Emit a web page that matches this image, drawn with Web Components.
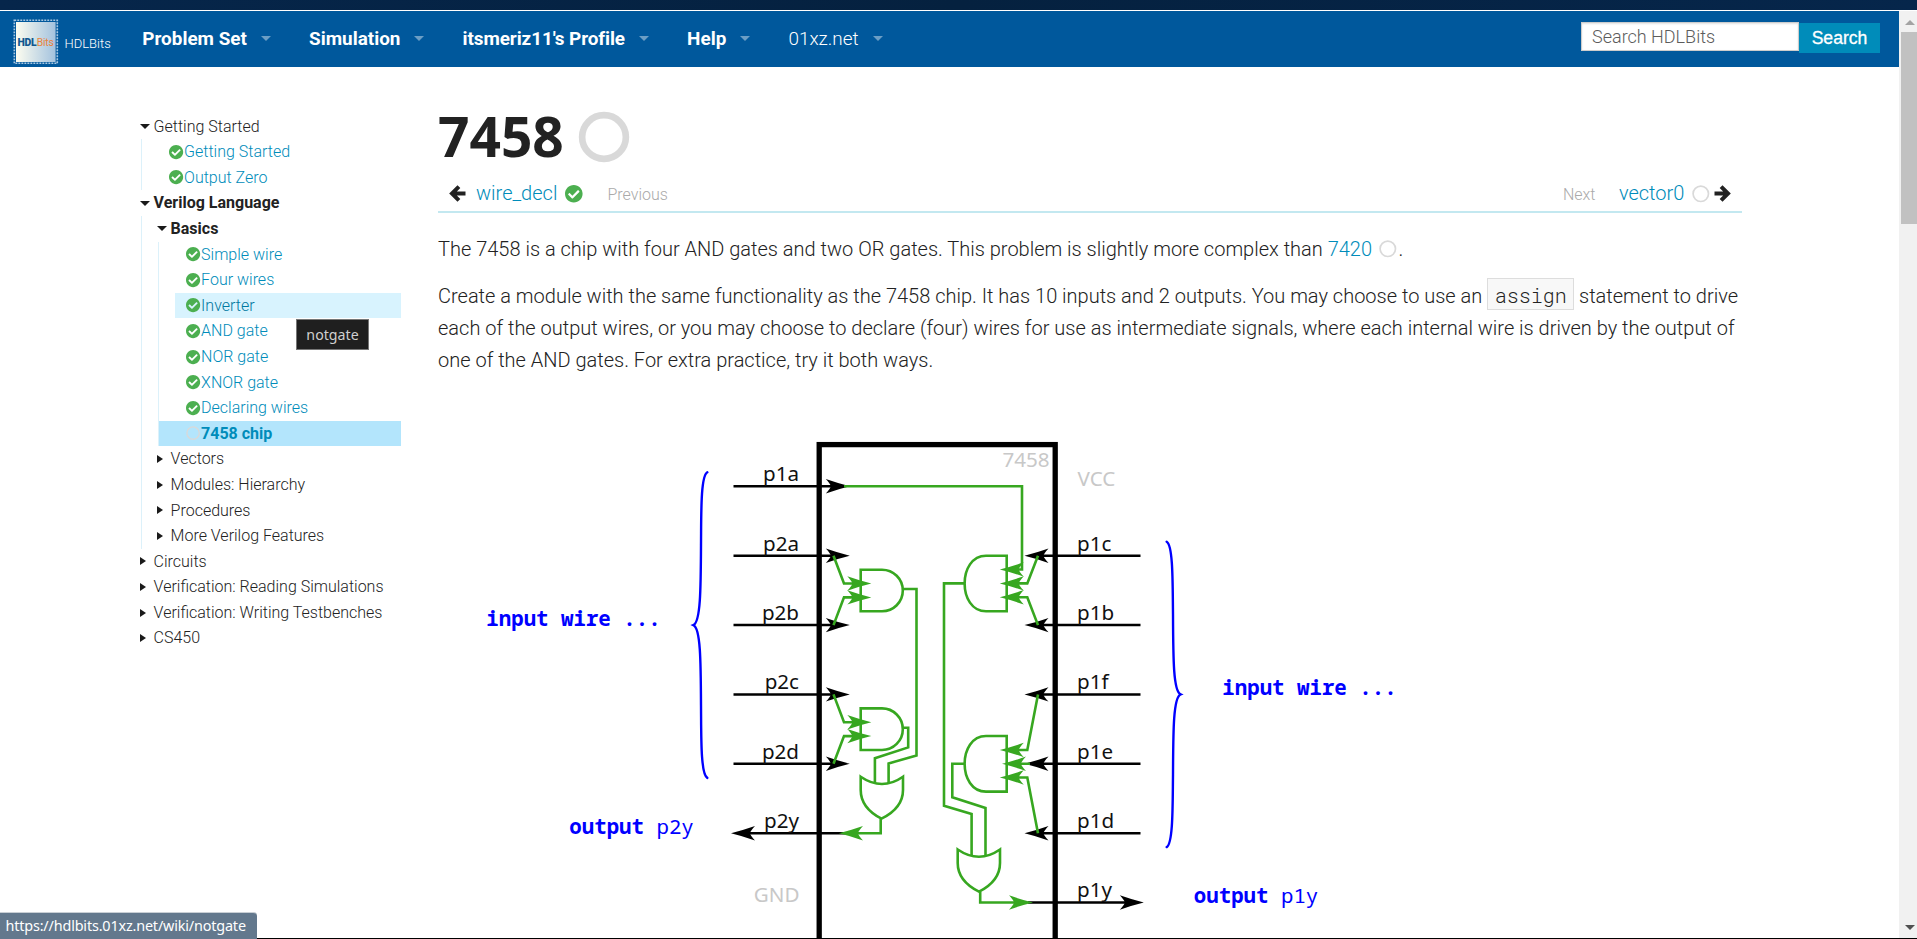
<!DOCTYPE html>
<html lang="en">
<head>
<meta charset="utf-8">
<title>7458 - HDLBits</title>
<style>
  html, body { margin: 0; height: 100%; overflow: hidden; background: #fff; }
  body { font-family: Roboto, "Liberation Sans", sans-serif; font-weight: 300; color: #222; }
</style>
</head>
<body>
<hdl-page>
  <hdl-topbar slot="top">
    <hdl-menu strong>Problem Set</hdl-menu>
    <hdl-menu strong>Simulation</hdl-menu>
    <hdl-menu strong style="letter-spacing:-.08px">itsmeriz11's Profile</hdl-menu>
    <hdl-menu strong>Help</hdl-menu>
    <hdl-menu>01xz.net</hdl-menu>
    <hdl-search slot="end"></hdl-search>
  </hdl-topbar>
  <hdl-tree slot="side">
    <hdl-group open label="Getting Started">
      <hdl-item state="done">Getting Started</hdl-item>
      <hdl-item state="done">Output Zero</hdl-item>
    </hdl-group>
    <hdl-group open strong label="Verilog Language">
      <hdl-group open strong label="Basics">
        <hdl-item state="done">Simple wire</hdl-item>
        <hdl-item state="done">Four wires</hdl-item>
        <hdl-item state="done" hovered tip="notgate">Inverter</hdl-item>
        <hdl-item state="done">AND gate</hdl-item>
        <hdl-item state="done">NOR gate</hdl-item>
        <hdl-item state="done">XNOR gate</hdl-item>
        <hdl-item state="done">Declaring wires</hdl-item>
        <hdl-item state="todo" current>7458 chip</hdl-item>
      </hdl-group>
      <hdl-group label="Vectors"></hdl-group>
      <hdl-group label="Modules: Hierarchy"></hdl-group>
      <hdl-group label="Procedures"></hdl-group>
      <hdl-group label="More Verilog Features"></hdl-group>
    </hdl-group>
    <hdl-group label="Circuits"></hdl-group>
    <hdl-group label="Verification: Reading Simulations"></hdl-group>
    <hdl-group label="Verification: Writing Testbenches"></hdl-group>
    <hdl-group label="CS450"></hdl-group>
  </hdl-tree>
  <hdl-article></hdl-article>
  <hdl-scrollbar slot="scroll"></hdl-scrollbar>
  <hdl-linkstatus slot="status">https://hdlbits.01xz.net/wiki/notgate</hdl-linkstatus>
</hdl-page>

<script>
function define(name, html, setup) {
  const template = document.createElement('template');
  template.innerHTML = html;
  customElements.define(name, class extends HTMLElement {
    constructor() {
      super();
      this.attachShadow({ mode: 'open' }).appendChild(template.content.cloneNode(true));
    }
    connectedCallback() { if (setup) setup(this, this.shadowRoot); }
  });
}

define('hdl-page', `
<style>
  :host { display: grid; grid-template-rows: 10px 1px 1fr 1px; height: 939px; width: 1917px; position: relative; overflow: hidden; }
  .edge { background: linear-gradient(90deg, #06264b, #05213f 50%, #06264b); }
  .view { display: flex; min-height: 0; overflow: hidden; }
  .doc { flex: 1; min-width: 0; overflow: hidden; }
  .cols { display: flex; padding-left: 140px; }
  .base { background: #000; }
</style>
<div class="edge"></div><div></div>
<div class="view">
  <div class="doc"><slot name="top"></slot><div class="cols"><slot name="side"></slot><slot></slot></div></div>
  <slot name="scroll"></slot>
</div>
<div class="base"></div>
<slot name="status"></slot>`);

define('hdl-logo', `
<style>
  :host { display: block; width: 46px; height: 46px; }
  svg { display: block; }
</style>
<svg width="46" height="46" viewBox="0 0 46 46">
  <defs><linearGradient id="g"><stop offset="0" stop-color="#fdfdf0"/><stop offset="1" stop-color="#a3c2de"/></linearGradient></defs>
  <rect x="1.3" y="1.3" width="43" height="43" fill="none" stroke="#a9c8e2" stroke-width="1.6" stroke-dasharray="1.9 1.1"/>
  <rect x="3" y="3" width="39.6" height="40" fill="url(#g)"/>
  <g font-family="Roboto" font-size="10.4"><text x="4.6" y="26.6" font-weight="900" fill="#12588f" textLength="19">HDL</text><text x="23.8" y="26.6" font-weight="400" fill="#e8833a" textLength="17">Bits</text></g>
</svg>`);

define('hdl-topbar', `
<style>
  :host { display: flex; box-sizing: border-box; height: 56px; background: #00589c; color: #fff; padding-left: 13px; }
  hdl-logo { margin-top: 8px; }
  .name { font-size: 13px; line-height: 16px; margin: 25px 0 0 5.5px; width: 46px; white-space: nowrap; }
  nav { display: flex; gap: 38.2px; margin-left: 31.8px; }
  .end { margin-left: auto; margin-right: 19px; }
</style>
<hdl-logo></hdl-logo><div class="name">HDLBits</div><nav><slot></slot></nav><div class="end"><slot name="end"></slot></div>`);

define('hdl-menu', `
<style>
  :host { display: flex; align-items: flex-start; font-size: 18.9px; line-height: 24px; padding-top: 16px; white-space: nowrap; }
  :host([strong]) { font-weight: 700; }
  i { width: 0; height: 0; border: 5.5px solid transparent; border-top-color: rgba(255,255,255,.42); border-bottom: 0; margin: 9px 0 0 14px; }
</style>
<slot></slot><i></i>`);

define('hdl-search', `
<style>
  :host { display: flex; align-items: flex-start; }
  .field { box-sizing: border-box; width: 218px; height: 29px; margin-top: 11px; border: 1px solid #ccc; background: #fff; box-shadow: inset 0 1px 2px rgba(0,0,0,.12); color: #5c5c5c; font-size: 18px; line-height: 27px; padding-left: 10px; }
  button { all: unset; box-sizing: border-box; width: 81px; height: 30px; margin-top: 12px; background: #008cba; color: #fff; font: 400 17.6px/27px "Liberation Sans", sans-serif; -webkit-text-stroke: .3px #fff; text-align: center; }
</style>
<div class="field">Search HDLBits</div><button>Search</button>`);

define('hdl-status', `
<style>
  :host { display: inline-block; width: 17.6px; height: 17.6px; }
  svg { display: none; width: 100%; height: 100%; overflow: visible; }
  :host([state=done]) .done, :host([state=todo]) .todo { display: block; }
  .todo circle { fill: none; stroke: #d9d9d9; stroke-width: var(--ring, 48); }
</style>
<svg class="done" viewBox="8 8 496 496"><path fill="#4caf50" d="M504 256c0 136.967-111.033 248-248 248S8 392.967 8 256 119.033 8 256 8s248 111.033 248 248zM227.314 387.314l184-184c6.248-6.248 6.248-16.379 0-22.627l-22.627-22.627c-6.248-6.249-16.379-6.249-22.628 0L216 308.118l-70.059-70.059c-6.248-6.248-16.379-6.248-22.628 0l-22.627 22.627c-6.248 6.248-6.248 16.379 0 22.627l104 104c6.249 6.249 16.379 6.249 22.628.001z"/></svg>
<svg class="todo" viewBox="8 8 496 496"><circle cx="256" cy="256" r="217"/></svg>`);

define('hdl-tree', `
<style>
  :host { display: block; width: 261px; padding-top: 46.6px; font-size: 16px; line-height: 25.6px; flex: none; }
</style><slot></slot>`);

define('hdl-group', `
<style>
  :host { display: block; }
  .head { display: flex; align-items: center; height: 25.6px; white-space: nowrap; }
  :host([strong]) .label { font-weight: 700; }
  .mark { width: 13.6px; flex: none; }
  .mark::before { content: ""; display: block; width: 0; height: 0; border: 4.5px solid transparent; border-left: 6px solid #1a1a1a; border-right: 0; margin-left: .3px; }
  :host([open]) .mark::before { border: 5px solid transparent; border-top: 5px solid #1a1a1a; border-bottom: 0; margin-left: 0; }
  .kids { display: none; border-left: 1px solid #dcf1fa; margin-left: 1px; padding-left: 15px; }
  :host([open]) .kids { display: block; }
</style>
<div class="head"><span class="mark"></span><span class="label"></span></div>
<div class="kids"><slot></slot></div>`,
(el, root) => { root.querySelector('.label').textContent = el.getAttribute('label'); });

define('hdl-item', `
<style>
  :host { display: flex; align-items: center; height: 25.6px; margin-left: 1px; padding-left: 11px; color: #008cba; white-space: nowrap; position: relative; }
  :host([hovered]) { background: #d8f3fe; color: #0078a0; }
  :host([current]) { background: #b3e5fc; font-weight: 700; margin-left: -15px; padding-left: 27px; }
  hdl-status { width: 14.2px; height: 14.2px; margin-right: .9px; }
  .tip { display: none; position: absolute; left: 121px; top: 26px; box-sizing: border-box; width: 73px; height: 31px; border: 1px solid #767676; background: #1f1f1f; color: #d0d0d0; font: 400 14.2px/29px "Noto Sans", sans-serif; text-align: center; z-index: 2; }
  :host([tip]) .tip { display: block; }
</style>
<hdl-status></hdl-status><span><slot></slot></span><div class="tip"></div>`,
(el, root) => {
  root.querySelector('hdl-status').setAttribute('state', el.getAttribute('state'));
  root.querySelector('.tip').textContent = el.getAttribute('tip') || '';
});

define('hdl-arrow', `
<style>
  :host { display: block; width: 17px; height: 17px; }
  :host([dir=right]) svg { transform: scaleX(-1); }
  svg { display: block; }
</style>
<svg width="17" height="17" viewBox="0 0 17 17" fill="none" stroke="#222" stroke-width="4" stroke-linejoin="miter"><path d="M9.9 1.6 3 8.5l6.9 6.9M3.5 8.5h13"/></svg>`);

define('hdl-article', `
<style>
  :host { display: block; width: 1304px; margin-left: 37px; font-size: 20px; line-height: 32px; }
  h1 { display: flex; align-items: flex-start; margin: 0; font: 700 55px/76px "Open Sans", sans-serif; height: 105px; }
  h1 span { margin-top: 30.5px; height: 76px; }
  h1 hdl-status { width: 50px; height: 50px; margin: 44.5px 0 0 15px; --ring: 66; }
  .pager { display: flex; height: 39px; border-bottom: 2px solid #c3e8f0; padding: 0 11px; line-height: 42px; }
  .pager hdl-arrow { margin-top: 13px; }
  a { color: #008cba; }
  .pager hdl-status { margin: 12.5px 0 0 8px; }
  small { font-size: 16px; color: #aaa; line-height: 46px; }
  p { margin: 0 0 15px; white-space: nowrap; }
  .first { margin-top: 20px; }
  p hdl-status { margin: 0 2px 0 2px; vertical-align: -1.5px; }
  code { display: inline-block; box-sizing: border-box; width: 87px; height: 32px; line-height: 32px; text-align: center; vertical-align: top; margin-top: -2px; border: 1px solid #ddd; background: #f8f8f8; font-family: "Roboto Mono", "Liberation Mono", monospace; font-size: 20px; }
</style>
<h1><span>7458</span><hdl-status state="todo"></hdl-status></h1>
<div class="pager">
  <hdl-arrow dir="left"></hdl-arrow><a style="margin-left:10px">wire_decl</a><hdl-status state="done"></hdl-status><small style="margin-left:24.5px">Previous</small>
  <small style="margin-left:auto;margin-right:23.5px">Next</small><a>vector0</a><hdl-status state="todo"></hdl-status><hdl-arrow dir="right" style="margin-left:4px"></hdl-arrow>
</div>
<p class="first">The 7458 is a chip with four AND gates and two OR gates. This problem is slightly more complex than <a>7420</a> <hdl-status state="todo"></hdl-status>.</p>
<p>Create a module with the same functionality as the 7458 chip. It has 10 inputs and 2 outputs. You may choose to use an <code>assign</code> statement to drive<br>each of the output wires, or you may choose to declare (four) wires for use as intermediate signals, where each internal wire is driven by the output of<br>one of the AND gates. For extra practice, try it both ways.</p>
<hdl-circuit></hdl-circuit>`);

define('hdl-circuit', `
<style>
  :host { display: block; height: 550px; }
  svg { display: block; }
  .pin { stroke: #000; stroke-width: 2.5; fill: none; }
  .wire { stroke: #37a720; stroke-width: 2.6; fill: none; }
  .head { fill: #37a720; }
  .brace { stroke: #00f; stroke-width: 2.4; fill: none; stroke-linecap: round; }
  text { font-family: "Noto Sans", "Open Sans", sans-serif; font-size: 20.6px; font-weight: 400; fill: #111; }
  .mute { fill: #c8c8c8; }
  .end { text-anchor: end; }
  .note { font-family: "Noto Sans Mono", "DejaVu Sans Mono", monospace; fill: #00f; font-size: 20.75px; font-weight: 700; white-space: pre; }
  .note .thin { font-weight: 400; }
</style>
<svg width="1304" height="550" viewBox="438 391 1304 550">
  <defs><path id="h" d="M.5 0Q-11 -2.8 -23.5 -7.2Q-19 -2.5 -18.5 0Q-19 2.5 -23.5 7.2Q-11 2.8 .5 0z"/></defs>
  <rect x="819.2" y="444.6" width="236" height="560" fill="none" stroke="#000" stroke-width="5.3"/>
  <g class="pin">
    <path d="M733.5 486.3H832M733.5 555.7H832M733.5 625.1H832M733.5 694.4H832M733.5 763.8H832M750 833.2H845"/>
    <path d="M1140.5 555.7H1042M1140.5 625.1H1042M1140.5 694.4H1042M1140.5 763.8H1042M1140.5 833.2H1042M1028 902.5H1126"/>
  </g>
  <g>
    <use href="#h" x="849.3" y="486.3"/><use href="#h" x="849.3" y="555.7"/><use href="#h" x="849.3" y="625.1"/><use href="#h" x="849.3" y="694.4"/><use href="#h" x="849.3" y="763.8"/>
    <use href="#h" transform="translate(731.5 833.2) scale(-1 1)"/>
    <use href="#h" transform="translate(1025 555.7) scale(-1 1)"/><use href="#h" transform="translate(1025 625.1) scale(-1 1)"/><use href="#h" transform="translate(1025 694.4) scale(-1 1)"/><use href="#h" transform="translate(1025 763.8) scale(-1 1)"/><use href="#h" transform="translate(1025 833.2) scale(-1 1)"/>
    <use href="#h" x="1143.3" y="902.5"/>
  </g>
  <g class="wire">
    <path d="M844 486.3H1022V569.5H1012"/>
    <path d="M833.5 555.7L844 583.5H855M833.5 625.1L844 597.4H855M860.7 569.7H882A20.8 20.8 0 0 1 882 611.3H860.7zM903 589H916.5V755.5L888.6 763.4V783"/>
    <path d="M833.5 694.4L844 722.2H855M833.5 763.8L844 736.1H855M860.7 708.4H882A20.8 20.8 0 0 1 882 750H860.7zM903 727.7H908.2V747.4L874.9 758.2V783"/>
    <path d="M860.7 776.7Q882 791.3 903 776.7V790Q903 808 881.5 818.7Q860.7 808 860.7 790zM880.7 818V833.2H855"/>
    <path d="M1038 555.7L1027.3 583.4H1015M1038 625.1L1027.3 597.3H1015M1006.7 555.7H986C957.5 555.7 957.5 611.3 986 611.3H1006.7zM964.7 583.4H944V805.7L971.6 813.9V856"/>
    <path d="M1038 694.4L1027.3 750H1018M1038 833.2L1027.3 777.5H1018M1030 763.8H1018M1006.7 736H986C957.5 736 957.5 791.6 986 791.6H1006.7zM964.7 763.8H952.3V797.2L985.5 808V856"/>
    <path d="M957.7 849.5Q979 864 1000 849.5V863Q1000 881 979 891.7Q957.7 881 957.7 863zM980.2 891V902.5H1018"/>
  </g>
  <g class="head">
    <use href="#h" x="870.8" y="583.5"/><use href="#h" x="870.8" y="597.4"/><use href="#h" x="870.8" y="722.2"/><use href="#h" x="870.8" y="736.1"/>
    <use href="#h" transform="translate(839.5 833.2) scale(-1 1)"/>
    <use href="#h" transform="translate(1000.3 569.5) scale(-1 1)"/><use href="#h" transform="translate(1000.3 583.4) scale(-1 1)"/><use href="#h" transform="translate(1000.3 597.3) scale(-1 1)"/>
    <use href="#h" transform="translate(1000.3 750) scale(-1 1)"/><use href="#h" transform="translate(1002.5 763.8) scale(-1 1)"/><use href="#h" transform="translate(1000.3 777.5) scale(-1 1)"/>
    <use href="#h" x="1032.5" y="902.5"/>
  </g>
  <g class="brace">
    <path d="M707.3 472.3C700.5 476 701.3 515 701 545C700.8 590 700.5 622 693.4 625.1C700.5 628.2 700.8 660 701 705C701.3 735 700.5 774.2 707.3 777.9"/>
    <path d="M1166.7 541.7C1173.2 545.4 1172.6 584 1173 614C1173.2 659 1173.3 691.3 1180.6 694.4C1173.3 697.5 1173.2 730 1173 775C1172.6 805 1173.2 843.5 1166.7 847.1"/>
  </g>
  <g class="end">
    <text x="799" y="481.3">p1a</text><text x="799" y="550.7">p2a</text><text x="799" y="620">p2b</text><text x="799" y="689.3">p2c</text><text x="799" y="758.7">p2d</text><text x="799" y="828">p2y</text>
    <text x="799.5" y="902.4" class="mute">GND</text><text x="1049.5" y="467" class="mute">7458</text>
  </g>
  <text x="1077.5" y="486.3" class="mute">VCC</text>
  <text x="1077" y="550.7">p1c</text><text x="1077" y="620">p1b</text><text x="1077" y="689.3">p1f</text><text x="1077" y="758.7">p1e</text><text x="1077" y="828">p1d</text><text x="1077" y="897.4">p1y</text>
  <text class="note" x="486.3" y="625.8">input wire ...</text>
  <text class="note" x="569.3" y="833.8">output <tspan class="thin">p2y</tspan></text>
  <text class="note" x="1222.3" y="695">input wire ...</text>
  <text class="note" x="1193.8" y="902.8">output <tspan class="thin">p1y</tspan></text>
</svg>`);

define('hdl-scrollbar', `
<style>
  :host { display: flex; flex-direction: column; width: 18px; background: #f1f1f1; }
  .up { height: 21px; display: flex; justify-content: center; padding-left: 3px; }
  .up i { width: 0; height: 0; border: 5px solid transparent; border-bottom-color: #a3a3a3; border-top: 0; margin-top: 9px; }
  .thumb { height: 192px; margin-left: 2px; background: #c1c1c1; }
  .down { margin-top: auto; height: 18px; display: flex; justify-content: center; padding-left: 3px; }
  .down i { width: 0; height: 0; border: 5px solid transparent; border-top-color: #505050; border-bottom: 0; margin-top: 5px; }
</style>
<div class="up"><i></i></div><div class="thumb"></div><div class="down"><i></i></div>`);

define('hdl-linkstatus', `
<style>
  :host { position: absolute; left: 0; bottom: 0; box-sizing: border-box; width: 257px; height: 27px; padding-left: 5.5px; background: #63788d; border-top: 1px solid #c9cfd5; border-radius: 0 4px 0 0; color: #fff; font: 400 14.4px/25px "Noto Sans", sans-serif; letter-spacing: -.17px; white-space: nowrap; }
</style><slot></slot>`);
</script>
</body>
</html>
